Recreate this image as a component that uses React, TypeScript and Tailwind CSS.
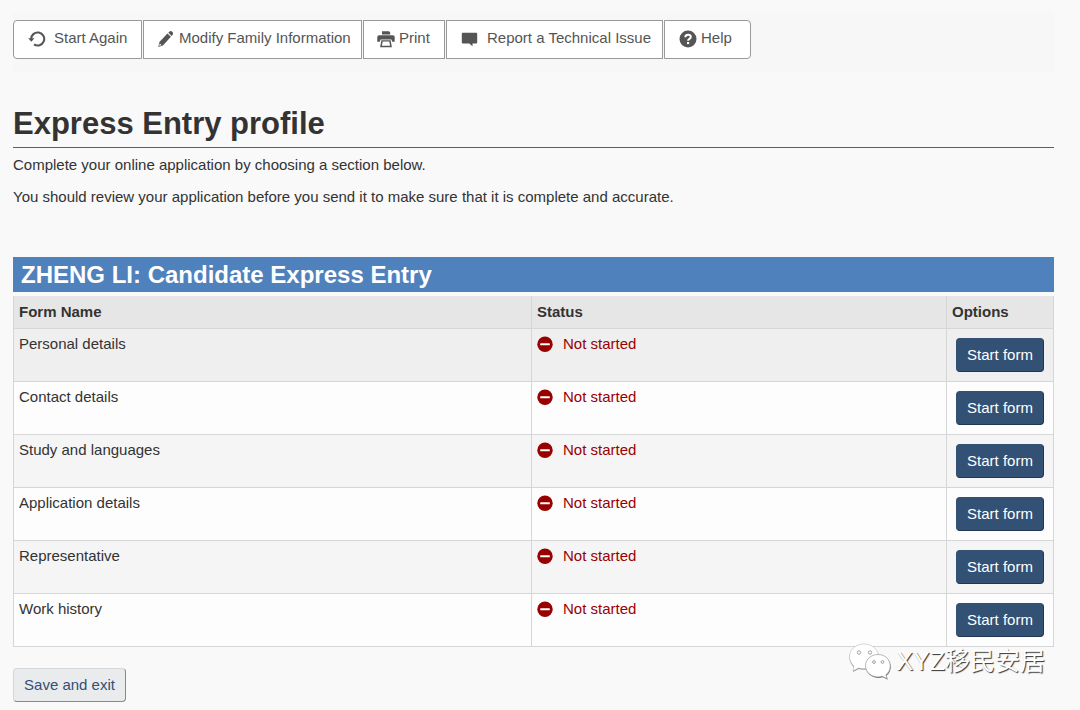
import React from "react";

const tools = [
  { label: "Start Again", icon: "restart", box: "w-[129px] rounded-l-[4px] pl-[14px]", gap: "gap-2" },
  { label: "Modify Family Information", icon: "pencil", box: "w-[219px] pl-[13px]", gap: "gap-1" },
  { label: "Print", icon: "print", box: "w-[82px] pl-[13px]", gap: "gap-1" },
  { label: "Report a Technical Issue", icon: "comment", box: "w-[217px] pl-[14px]", gap: "gap-2" },
  { label: "Help", icon: "help", box: "w-[87px] rounded-r-[4px] pl-[14px]", gap: "gap-1" },
];

const forms = [
  "Personal details",
  "Contact details",
  "Study and languages",
  "Application details",
  "Representative",
  "Work history",
];

function ToolIcon({ name }: { name: string }) {
  return (
    <svg viewBox="0 0 18 18" className="mt-[2px] size-[18px] shrink-0" fill="#555" aria-hidden="true">
      {name === "restart" && (
        <>
          <path d="M3.200 9.300a6.500 6.500 0 1 1 2.800 5" fill="none" stroke="#555" strokeWidth="2.100" />
          <path d="M.2 8.300h6.200L3.300 11.800z" />
        </>
      )}
      {name === "pencil" && (
        <path
          d="M1.300 16.900l1.100-4.800 8-8.500 3.500 3.200-8 8.600zM2.800 13.500l-.6 2.500 2.300-.9zM11.300 2.700l1-1c.8-.7 1.700-.8 2.500-.2l.8.800c.7.700.7 1.600 0 2.400l-.9 1.200z"
          fillRule="evenodd"
        />
      )}
      {name === "print" && (
        <path
          d="M5 1.200h7l1.200 1.200v2H5zM2.300 5.300h13.400c1.300 0 2 .8 2 2v4.500h-2.500l-.8-2.300H3.600l-.8 2.300H.3V7.300c0-1.200.7-2 2-2zM4.400 10.200h9.200l1.300 7H3.100zM5.700 11.500l-.8 4.300h8.200l-.8-4.300z"
          fillRule="evenodd"
        />
      )}
      {name === "comment" && (
        <path d="M2.200 2.800h12.600c.9 0 1.400.5 1.400 1.400v8c0 .9-.5 1.400-1.400 1.400h-3.300v2.600l-3.300-2.600h-6C1.300 13.600.8 13.100.8 12.200v-8c0-.9.500-1.400 1.400-1.400z" />
      )}
      {name === "help" && (
        <>
          <circle cx="9" cy="9" r="8.500" />
          <path d="M6.300 7.200c0-3.400 5.500-3.200 5.500-.2 0 1.900-2.700 1.900-2.700 3.700" fill="none" stroke="#fff" strokeWidth="2" />
          <path d="M8 12h2.200v2.100H8z" fill="#fff" />
        </>
      )}
    </svg>
  );
}

function NotStartedIcon() {
  return (
    <svg viewBox="0 0 16 16" className="size-4" aria-hidden="true">
      <circle cx="8" cy="8.300" r="7.700" fill="#990000" />
      <rect x="3.200" y="7.300" width="9.600" height="2" rx=".4" fill="#fff" />
    </svg>
  );
}

function Watermark() {
  return (
    <div className="absolute right-[35px] bottom-[30px] flex items-center gap-1">
      <svg viewBox="0 0 44 38" className="h-[38px] w-[44px]" aria-hidden="true">
        <path
          d="M16 2.900C8 2.900 1.500 8.400 1.500 15.400c0 4 2 7.500 4.500 9.800L5 29.900l5.600-3c1.600.5 3.700.7 5.400.7 8 0 14.500-5.200 14.500-12.200S24 2.900 16 2.900z"
          fill="#888"
        />
        <path
          d="M16 2C8 2 1.500 7.500 1.500 14.500c0 4 2 7.500 4.500 9.800L5 29l5.600-3c1.600.5 3.700.7 5.400.7 8 0 14.500-5.200 14.500-12.200S24 2 16 2z"
          fill="#fff"
          stroke="#bbb"
          strokeWidth=".6"
        />
        <path
          d="M30.500 13.400c-7 0-12.500 5-12.500 11.300s5.500 11.200 12.500 11.200c1.600 0 3-.3 4.400-.7l4.800 2.500-1.300-4c3-2 4.300-5.200 4.300-9 0-6.300-5.200-11.300-12.200-11.300z"
          fill="#777"
        />
        <path
          d="M30 12.500c-7 0-12.500 5-12.500 11.300S23 35 30 35c1.600 0 3-.3 4.400-.7l4.800 2.500-1.300-4c3-2 4.300-5.200 4.300-9 0-6.300-5.200-11.300-12.200-11.300z"
          fill="#fff"
          stroke="#888"
          strokeWidth=".6"
        />
        <g fill="#fff" stroke="#999" strokeWidth=".9">
          <circle cx="11" cy="10.500" r="1.700" />
          <circle cx="22" cy="10.500" r="1.700" />
          <circle cx="26" cy="20" r="1.400" />
          <circle cx="34.500" cy="20" r="1.400" />
        </g>
      </svg>
      <span className="font-['Liberation_Sans','Noto_Sans_CJK_SC',sans-serif] text-[25px] leading-8 text-white [text-shadow:1px_1px_1px_#333]">
        XYZ移民安居
      </span>
    </div>
  );
}

export default function App() {
  return (
    <main className="relative min-h-screen bg-[#f9f9f9] pt-3 pr-[26px] pb-2 pl-[13px] font-['Liberation_Sans',Arial,sans-serif] text-[15px] leading-5 text-[#333]">
      <nav aria-label="Tools" className="flex gap-px bg-[#f7f7f7] pt-2 pb-[13px]">
        {tools.map((t) => (
          <button
            key={t.label}
            type="button"
            className={`flex h-[39px] items-center border border-[#999] bg-white pb-[3px] whitespace-nowrap text-[#555] ${t.box} ${t.gap}`}
          >
            <ToolIcon name={t.icon} />
            {t.label}
          </button>
        ))}
      </nav>

      <h1 className="mt-8 border-b border-[#af3c43] pb-1 text-[31px] leading-[39px] font-bold">Express Entry profile</h1>
      <p className="mt-[7px]">Complete your online application by choosing a section below.</p>
      <p className="mt-3">
        You should review your application before you send it to make sure that it is complete and accurate.
      </p>

      <h2 className="mt-[50px] bg-[#4f81bd] px-2 text-[24px] leading-[35px] font-bold text-white">
        ZHENG LI: Candidate Express Entry
      </h2>

      <table className="mt-1 w-full table-fixed border-collapse border-b border-[#ccc]">
        <colgroup>
          <col />
          <col className="w-[415px]" />
          <col className="w-[107px]" />
        </colgroup>
        <thead>
          <tr className="h-8 bg-[#e6e6e6] text-left">
            <th className="border-x border-b border-[#d6d6d6] px-[5px]">Form Name</th>
            <th className="border-x border-b border-[#d6d6d6] px-[5px]">Status</th>
            <th className="border-x border-b border-[#d6d6d6] px-[5px]">Options</th>
          </tr>
        </thead>
        <tbody>
          {forms.map((name, i) => (
            <tr
              key={name}
              className={`h-[53px] align-top ${i === 0 ? "bg-[#efefef]" : i % 2 ? "bg-[#fdfdfd]" : "bg-[#f5f5f5]"}`}
            >
              <td className="border border-[#d6d6d6] px-[5px] pt-[5px]">{name}</td>
              <td className="border border-[#d6d6d6] px-[5px] pt-[5px]">
                <span className="flex items-center gap-[10px] text-[#990000]">
                  <NotStartedIcon />
                  Not started
                </span>
              </td>
              <td className="border border-[#d6d6d6] px-[9px] pt-[9px]">
                <button
                  type="button"
                  className="h-[34px] w-full rounded-[4px] border border-[#335075] border-r-[#223650] border-b-[#223650] bg-[#335075] whitespace-nowrap text-white"
                >
                  Start form
                </button>
              </td>
            </tr>
          ))}
        </tbody>
      </table>

      <button
        type="button"
        className="mt-[21px] h-[34px] w-[113px] rounded-[4px] border border-[#d5d8db] border-r-[#888] border-b-[#888] bg-[#eaebed] whitespace-nowrap text-[#335075]"
      >
        Save and exit
      </button>
      <Watermark />
    </main>
  );
}
